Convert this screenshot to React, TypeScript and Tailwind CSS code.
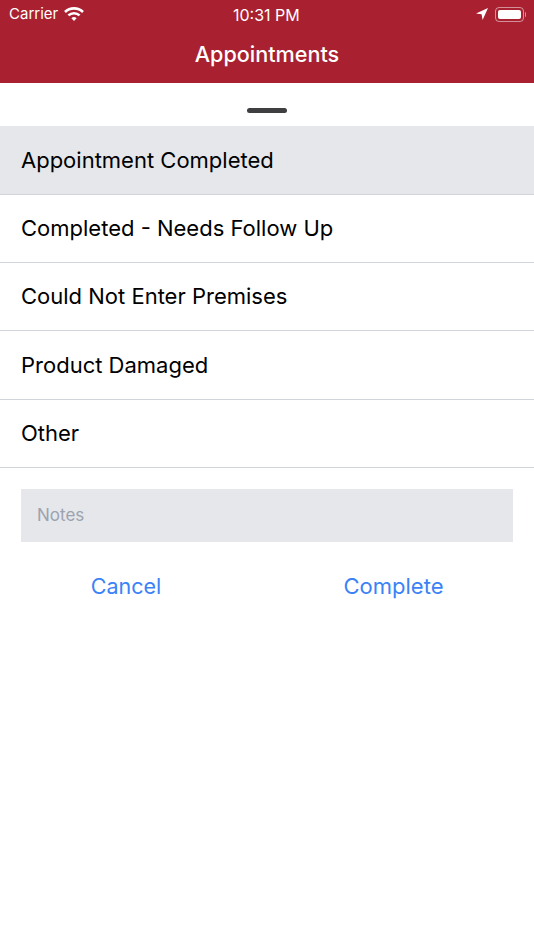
const options = [
  { label: "Appointment Completed", row: "h-[69px] bg-[#e5e7eb]" },
  { label: "Completed - Needs Follow Up", row: "h-[68px]" },
  { label: "Could Not Enter Premises", row: "h-[68px]" },
  { label: "Product Damaged", row: "h-[69px]" },
  { label: "Other", row: "h-[68px]" },
];

function WifiIcon() {
  return (
    <svg width="20" height="15" viewBox="0 0 20 15" className="ml-[6px]">
      <path d="M1 5 A13 13 0 0 1 19 5" fill="none" stroke="white" strokeWidth="2.6" />
      <path d="M4.4 8.4 A8.2 8.2 0 0 1 15.6 8.4" fill="none" stroke="white" strokeWidth="2.6" />
      <path d="M7.4 11.2 A4 4 0 0 1 12.6 11.2 L10 14 Z" fill="white" />
    </svg>
  );
}

function LocationIcon() {
  return (
    <svg width="12" height="12" viewBox="0 0 12 12">
      <path d="M12 0 L0 5.4 L5.6 6.3 L6.6 12 Z" fill="white" />
    </svg>
  );
}

function BatteryIcon() {
  return (
    <div className="flex items-center">
      <div className="flex h-[15px] w-[29px] items-center rounded-[4px] border border-white/50 p-[2px]">
        <div className="h-full w-full rounded-[2px] bg-white" />
      </div>
      <div className="ml-px h-[5px] w-[1px] rounded-r bg-white/50" />
    </div>
  );
}

export default function App() {
  return (
    <div className="h-[950px] w-[534px] bg-white font-['Inter','Liberation_Sans',sans-serif]">
      <div className="h-[83px] bg-[#a92131] text-white">
        <div className="relative flex h-[28px] items-center justify-between pl-[9px] pr-[8px]">
          <div className="flex items-center pt-[1px] text-[15px]">
            Carrier
            <WifiIcon />
          </div>
          <div className="absolute left-[233px] top-[3px] text-[16px]">10:31 PM</div>
          <div className="flex items-center gap-[7px]">
            <LocationIcon />
            <BatteryIcon />
          </div>
        </div>
        <div className="text-center text-[21.6px] leading-[52px] font-medium">Appointments</div>
      </div>
      <div className="flex h-[43px] items-center justify-center pt-[11px]">
        <div className="h-[5px] w-[40px] rounded-full bg-[#3f3f41]" />
      </div>
      <div>
        {options.map((option) => (
          <div
            key={option.label}
            className={`flex items-center border-b border-[#d1d5db] pl-[21px] text-[22px] text-black ${option.row}`}
          >
            {option.label}
          </div>
        ))}
      </div>
      <div className="mx-[21px] mt-[21px] flex h-[53px] items-center bg-[#e5e7eb] pl-[16px] pt-[1px] text-[17px] text-[#9ca3af]">
        Notes
      </div>
      <div className="mt-[26px] flex">
        <div className="w-[252px] text-center text-[21.5px] leading-[36px] text-[#3b82f6]">Cancel</div>
        <div className="w-[282px] pl-[1px] text-center text-[22px] leading-[36px] text-[#3b82f6]">Complete</div>
      </div>
    </div>
  );
}
